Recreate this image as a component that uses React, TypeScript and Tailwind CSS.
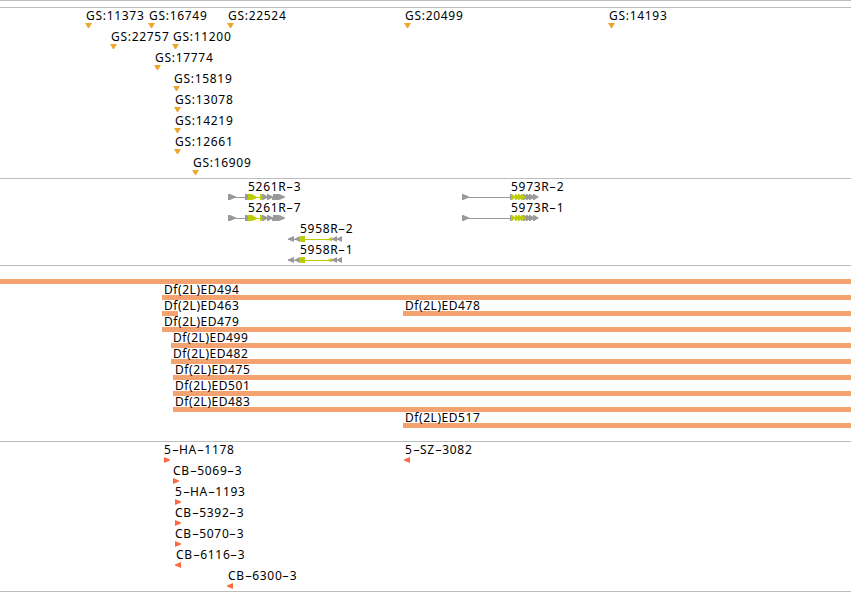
interface Mark {
  x: number;
  label: string;
  dir?: 'left' | 'right';
}

interface Bar {
  x: number;
  width?: number;
  label?: string;
}

interface Gene {
  x: number;
  label: string;
  kind: 'long' | 'reverse' | 'dense';
}

const INSERTIONS: Mark[][] = [
  [
    { x: 86, label: 'GS:11373' },
    { x: 149, label: 'GS:16749' },
    { x: 228, label: 'GS:22524' },
    { x: 405, label: 'GS:20499' },
    { x: 609, label: 'GS:14193' },
  ],
  [
    { x: 111, label: 'GS:22757' },
    { x: 173, label: 'GS:11200' },
  ],
  [{ x: 155, label: 'GS:17774' }],
  [{ x: 174, label: 'GS:15819' }],
  [{ x: 175, label: 'GS:13078' }],
  [{ x: 175, label: 'GS:14219' }],
  [{ x: 175, label: 'GS:12661' }],
  [{ x: 193, label: 'GS:16909' }],
];

const GENES: Gene[][] = [
  [
    { x: 228, label: '5261R-3', kind: 'long' },
    { x: 462, label: '5973R-2', kind: 'dense' },
  ],
  [
    { x: 228, label: '5261R-7', kind: 'long' },
    { x: 462, label: '5973R-1', kind: 'dense' },
  ],
  [{ x: 288, label: '5958R-2', kind: 'reverse' }],
  [{ x: 288, label: '5958R-1', kind: 'reverse' }],
];

const DEFICIENCIES: Bar[][] = [
  [{ x: 0 }],
  [{ x: 162, label: 'Df(2L)ED494' }],
  [
    { x: 162, width: 16, label: 'Df(2L)ED463' },
    { x: 403, label: 'Df(2L)ED478' },
  ],
  [{ x: 162, label: 'Df(2L)ED479' }],
  [{ x: 171, label: 'Df(2L)ED499' }],
  [{ x: 171, label: 'Df(2L)ED482' }],
  [{ x: 173, label: 'Df(2L)ED475' }],
  [{ x: 173, label: 'Df(2L)ED501' }],
  [{ x: 173, label: 'Df(2L)ED483' }],
  [{ x: 403, label: 'Df(2L)ED517' }],
];

const ELEMENTS: Mark[][] = [
  [
    { x: 164, label: '5-HA-1178', dir: 'right' },
    { x: 405, label: '5-SZ-3082', dir: 'left' },
  ],
  [{ x: 173, label: 'CB-5069-3', dir: 'right' }],
  [{ x: 175, label: '5-HA-1193', dir: 'right' }],
  [{ x: 175, label: 'CB-5392-3', dir: 'right' }],
  [{ x: 175, label: 'CB-5070-3', dir: 'right' }],
  [{ x: 176, label: 'CB-6116-3', dir: 'left' }],
  [{ x: 228, label: 'CB-6300-3', dir: 'left' }],
];

const GRAY = '#999999';
const GREEN = '#bbcc00';

// Hyphens are as wide as a digit in the track labels
function Label({ text }: { text: string }) {
  return (
    <span className="block h-[14px] whitespace-pre leading-[14px]">
      {text.split(/(-)/).map((part, i) =>
        part === '-' ? (
          <span key={i} className="inline-block w-[7.4px] origin-left scale-x-[1.8]">-</span>
        ) : (
          part
        ),
      )}
    </span>
  );
}

function GeneModel({ kind }: { kind: Gene['kind'] }) {
  if (kind === 'long') {
    return (
      <svg width="58" height="6" className="block">
        <path d="M0 3h50v1H0z" fill={GRAY} />
        <path d="M0 0h2l6 2.5v1L2 6H0zM17 0h2l6 3-6 3h-2z" fill={GRAY} />
        <path d="M20 0h4l5 3h3V0h1l4 2.5v1L33 6h-1V4h-3l-5 2h-4z" fill={GREEN} />
        <path d="M34 0h1l4 2V0h1l5 2.5V0h6l6 2.5v1L51 6h-7V4l-4 2h-1V4l-4 2h-1V4h1V3h-1z" fill={GRAY} />
      </svg>
    );
  }
  if (kind === 'dense') {
    return (
      <svg width="78" height="6" className="block">
        <path d="M0 3h74v1H0z" fill={GRAY} />
        <path d="M0 0h1l6 2.5v1L1 6H0zM48 0h1v6h-1z" fill={GRAY} />
        {[61, 64, 67, 71].map((x) => (
          <path key={x} d={`M${x} 0h1l5 3-5 3h-1z`} fill={GRAY} />
        ))}
        {[49, 53, 56, 59].map((x) => (
          <path key={x} d={`M${x} 0h1l4 3-4 3h-1z`} fill={GREEN} />
        ))}
      </svg>
    );
  }
  return (
    <svg width="54" height="6" className="block">
      <path d="M0 3h54v1H0z" fill={GRAY} />
      <path d="M6 0v6L0 3.5v-1zM12 0v6L7 3.5v-1zM49 0v6l-5-2.5v-1zM54 0v6l-5-2.5v-1z" fill={GRAY} />
      <path d="M17 0v3h23l4-2v4l-4-1H17v2h-4l-2-2V2l2-2z" fill={GREEN} />
    </svg>
  );
}

function Marker({ dir }: { dir?: Mark['dir'] }) {
  if (!dir) {
    return (
      <svg className="-ml-px block" width="7" height="5">
        <path d="M0 0h7L4 5H3z" fill="#eea52c" />
      </svg>
    );
  }
  return (
    <svg className={dir === 'left' ? '-ml-px block' : 'block'} width="6" height="6">
      <path d={dir === 'right' ? 'M0 0l6 2.5v1L0 6z' : 'M6 0L0 2.5v1L6 6z'} fill="#fb6a43" />
    </svg>
  );
}

function MarkRows({ rows }: { rows: Mark[][] }) {
  return rows.map((row, i) => (
    <div key={i} className="relative h-[21px]">
      {row.map((mark) => (
        <div key={mark.label} className="absolute" style={{ left: mark.x }}>
          <Label text={mark.label} />
          <Marker dir={mark.dir} />
        </div>
      ))}
    </div>
  ));
}

const LABEL_INDENT = { long: 'pl-[20px]', dense: 'pl-[49px]', reverse: 'pl-[12px]' };

export default function App() {
  return (
    <main className="flex h-[592px] w-[851px] flex-col overflow-hidden bg-white font-['Noto_Sans',sans-serif] text-[12px] tracking-[0.7px] text-black">
      <div className="h-2 border-y border-[#bdbdbd]" />

      <section className="flex h-[171px] flex-col border-b border-[#bdbdbd] pt-px">
        <MarkRows rows={INSERTIONS} />
      </section>

      <section className="flex h-[87px] flex-col border-b border-[#bdbdbd] pt-px">
        {GENES.map((row, i) => (
          <div key={i} className="relative h-[21px]">
            {row.map((gene) => (
              <div key={gene.label} className="absolute" style={{ left: gene.x }}>
                <div className={LABEL_INDENT[gene.kind]}>
                  <Label text={gene.label} />
                </div>
                <GeneModel kind={gene.kind} />
              </div>
            ))}
          </div>
        ))}
      </section>

      <section className="flex h-[176px] flex-col border-b border-[#bdbdbd] pt-px">
        {DEFICIENCIES.map((row, i) => (
          <div key={i} className="relative h-4">
            {row.map((bar) => (
              <div
                key={bar.x}
                className="absolute h-[17px] border-b-[5px] border-[#f4a270] pl-[2px] tracking-[0.55px]"
                style={{ left: bar.x, width: bar.width ?? 851 - bar.x }}
              >
                {bar.label && <Label text={bar.label} />}
              </div>
            ))}
          </div>
        ))}
      </section>

      <section className="flex h-[150px] flex-col border-b border-[#bdbdbd] pt-px">
        <MarkRows rows={ELEMENTS} />
      </section>
    </main>
  );
}
